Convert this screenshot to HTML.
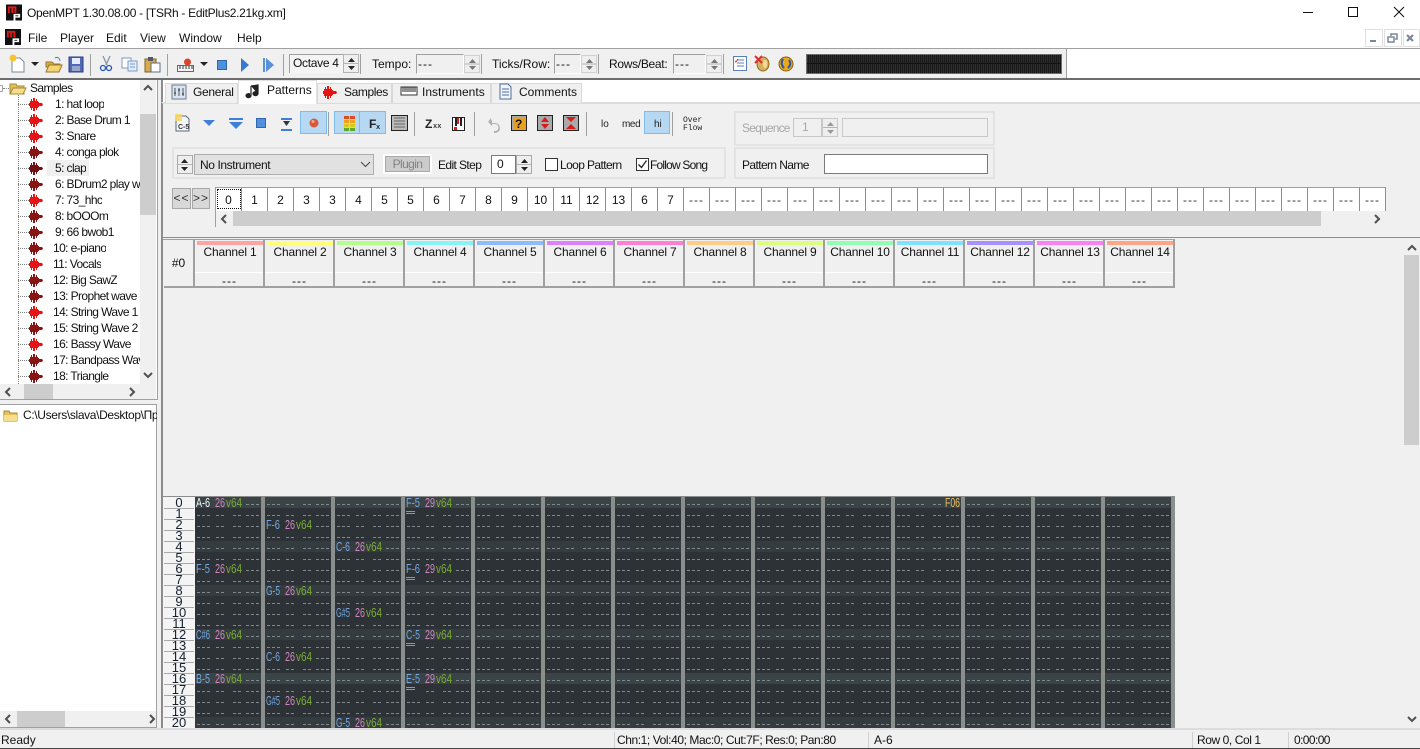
<!DOCTYPE html>
<html><head><meta charset="utf-8"><title>OpenMPT</title>
<style>
html,body{margin:0;padding:0;width:1420px;height:749px;overflow:hidden;background:#f0f0f0}
body{position:relative;font:12px/16px "Liberation Sans",sans-serif;color:#111}
.a,svg.a{position:absolute;white-space:nowrap;box-sizing:border-box}
svg.ar{width:7px;height:4px;margin-left:1px}
.t{letter-spacing:-.6px}
.q{letter-spacing:-.42px}
.bx{position:absolute;box-sizing:border-box}
.sep{position:absolute;width:1px;background:#a0a0a0}
.tab{position:absolute;box-sizing:border-box;top:83px;height:20px;border:1px solid #d9d9d9;border-bottom:0;background:#f0f0f0}
.gb{position:absolute;box-sizing:border-box;border:2px solid #e3e3e3}
.cell{position:absolute;top:187px;width:26px;height:24px;background:#fff;border-right:1.5px solid #8c8c8c;border-top:1px solid #a0a0a0;text-align:center;line-height:24px;box-sizing:border-box}
.cell:nth-child(n+19){letter-spacing:1px;color:#333}
.ch{position:absolute;top:240px;width:70px;height:48px;box-sizing:border-box;border-right:2px solid #a0a0a0;border-bottom:2px solid #a0a0a0;text-align:center}
.ch i{position:absolute;left:2px;top:1px;width:66px;height:4px}
.ch b{position:absolute;left:2px;right:0;top:4px;font-weight:normal;letter-spacing:-.2px}
.ch u{position:absolute;left:0;right:0;top:32px;border-top:1px solid #fff;text-decoration:none;line-height:17px;letter-spacing:1px;padding-left:1px}
.sp{position:absolute;width:16px;box-sizing:border-box;border:1px solid #b4b4b4;background:linear-gradient(#eee 0 46%,#b4b4b4 46% 54%,#eee 54%)}
.row{position:absolute;left:0;height:16px;width:140px}
.row s{position:absolute;left:18px;top:8px;width:11px;border-top:1px dotted #808080}
.row svg{position:absolute;left:29px;top:2px}
.row span{position:absolute;top:0;white-space:nowrap;overflow:hidden;max-width:87px;color:#111;letter-spacing:-.6px}
</style></head><body>
<svg width="0" height="0" style="position:absolute"><defs>
<symbol id="w" viewBox="0 0 14 13"><path fill="currentColor" d="M0 5h1V3h1V1h1v2h1V0h2v3h1V1h1v2h1v1h1v1h3l1 1.500-1 1.500h-3v1H9v1H8v2H7v-2H6v3H4v-3H3v2H2v-2H1V8H0z"/></symbol>
<symbol id="lg" viewBox="0 0 17 17"><rect width="17" height="17" fill="#111"/><path fill="#e01818" d="M2 2h9v7H9V4H7.6v5H5.6V4H4v5H2z"/><path fill="#fff" d="M8 10h7v4h-5v3H8zM10 11.5v1h3v-1z"/></symbol>
<symbol id="up" viewBox="0 0 9 5"><path d="M4.5 0L9 5H0z" fill="currentColor"/></symbol>
<symbol id="dn" viewBox="0 0 9 5"><path d="M0 0h9L4.5 5z" fill="currentColor"/></symbol>
<pattern id="d" width="70" height="11" patternUnits="userSpaceOnUse" x="195" y="497"><path fill="#808a8d" d="M2 7h3v1H2zM7 7h3v1H7zM12 7h3v1h-3zM21 7h3v1h-3zM26 7h3v1h-3zM38 7h3v1h-3zM43 7h3v1h-3zM51 7h3v1h-3zM56 7h3v1h-3zM61 7h3v1h-3z"/></pattern>
</defs></svg>

<!-- title bar -->
<div class="bx" style="left:0;top:0;width:1420px;height:48px;background:#fff"></div>
<svg class="a" style="left:6px;top:4px" width="16" height="17"><use href="#lg"/></svg>
<div class="a" style="left:27px;top:5px;letter-spacing:-.3px">OpenMPT 1.30.08.00 - [TSRh - EditPlus2.21kg.xm]</div>
<svg class="a" style="left:1300px;top:4px" width="115" height="18" fill="none" stroke="#111"><path d="M3 8.500h10M48.500 3.500h9v9h-9zM94 3l10 10M104 3L94 13"/></svg>
<!-- menu -->
<svg class="a" style="left:5px;top:29px" width="16" height="16"><use href="#lg"/></svg>
<div class="a" style="left:28px;top:30px">File</div><div class="a" style="left:60px;top:30px">Player</div><div class="a" style="left:106px;top:30px">Edit</div><div class="a" style="left:140px;top:30px">View</div><div class="a" style="left:179px;top:30px">Window</div><div class="a" style="left:237px;top:30px">Help</div>
<div class="bx" style="left:1365px;top:29px;width:18px;height:18px;border:1px solid #e0e0e0"></div><div class="bx" style="left:1384px;top:29px;width:18px;height:18px;border:1px solid #e0e0e0"></div><div class="bx" style="left:1403px;top:29px;width:17px;height:18px;border:1px solid #e0e0e0"></div>
<svg class="a" style="left:1365px;top:29px" width="55" height="18" fill="none" stroke="#7b879b" stroke-width="2"><path d="M5 12h6"/><path stroke-width="1.500" d="M23 8h6v5h-6zM26 7V5h6v5h-2"/><path stroke-width="2.200" d="M42 6l6 6M48 6l-6 6"/></svg>

<!-- main toolbar -->
<div class="bx" style="left:0;top:48px;width:1420px;height:32px;border-top:1px solid #a0a0a0;border-bottom:2px solid #6d6d6d;background:#fff"></div>
<div class="bx" style="left:0;top:49px;width:1067px;height:29px;background:#f0f0f0;border-right:1px solid #a0a0a0"></div>
<svg class="a" style="left:0;top:50px" width="300" height="28">
<path d="M12 8h8l4 4v10H12z" fill="#fff" stroke="#7c8a99"/><circle cx="13" cy="8" r="3.500" fill="#f5c431"/>
<path d="M31 12h8l-4 4zM200 12h8l-4 4z" fill="#222"/>
<path d="M46 12h6l2 2h6v3h-14z" fill="#d8a93c" stroke="#9a7a2c"/><path d="M46 22l3-7h13l-3 7z" fill="#f4d474" stroke="#9a7a2c"/><path d="M55 8q4-2 5 3" stroke="#3f78c0" fill="none"/>
<rect x="69" y="7" width="14" height="15" fill="#4f68b8" stroke="#2e3e80"/><rect x="72" y="8" width="8" height="6" fill="#e8eef6"/><rect x="72" y="16" width="8" height="5" fill="#9aa6c8"/>
<path d="M103 6l4 9M110 6l-4 9" stroke="#8a96a2" stroke-width="1.300"/><circle cx="103" cy="18" r="2.500" fill="none" stroke="#2458b8" stroke-width="1.300"/><circle cx="109" cy="18" r="2.500" fill="none" stroke="#2458b8" stroke-width="1.300"/>
<path d="M122 8h9v10h-9z" fill="#fff" stroke="#7a9ac8"/><path d="M128 11h9v10h-9z" fill="#e4eefa" stroke="#7a9ac8"/><path d="M130 14h5M130 17h5" stroke="#7a9ac8"/>
<rect x="145" y="9" width="11" height="13" fill="#d9a94a" stroke="#7a6330"/><path d="M151 13h9v9h-9z" fill="#fff" stroke="#5b6b80"/><rect x="148" y="7" width="5" height="4" fill="#556"/>
<rect x="177.500" y="15.500" width="16" height="6" fill="#f4f4f4" stroke="#666"/><path d="M180 16v3M183 16v3M186 16v3M189 16v3M192 16v3" stroke="#333"/><circle cx="187.500" cy="12" r="3.500" fill="#d8442c"/>
<rect x="217.500" y="10.500" width="9" height="9" fill="#4f8fdc" stroke="#2f68b0"/>
<path d="M241 8l8 7-8 7z" fill="#3a78cc"/><path d="M263 8h2v14h-2zM266 8l8 7-8 7z" fill="#5a90d8"/>
<path d="M90.500 4v22M167.500 4v22M283.500 4v22" stroke="#a0a0a0"/>
</svg>
<div class="bx" style="left:289px;top:54px;width:54px;height:19px;border-top:1px solid #a0a0a0;border-left:1px solid #a0a0a0;background:#f4f4f4;padding-left:3px;line-height:16px;letter-spacing:-.3px">Octave 4</div>
<div class="sp" style="left:343px;top:54px;height:19px"></div>
<svg class="a ar" style="left:347px;top:58px;color:#222" width="9" height="5"><use href="#up"/></svg><svg class="a ar" style="left:347px;top:66px;color:#222" width="9" height="5"><use href="#dn"/></svg>
<div class="sep" style="left:360px;top:54px;height:20px"></div>
<div class="a" style="left:372px;top:56px">Tempo:</div>
<div class="bx" style="left:416px;top:54px;width:48px;height:20px;border-top:1px solid #a0a0a0;border-left:1px solid #a0a0a0;padding-left:1px;line-height:19px;border-bottom:1px solid #fff;border-right:1px solid #fff;letter-spacing:1px">---</div>
<div class="sp" style="left:464px;top:55px;height:18px;border-color:#d0d0d0"></div>
<svg class="a ar" style="left:468px;top:59px;color:#777" width="9" height="5"><use href="#up"/></svg><svg class="a ar" style="left:468px;top:66px;color:#777" width="9" height="5"><use href="#dn"/></svg>
<div class="sep" style="left:481px;top:54px;height:20px"></div>
<div class="a" style="left:492px;top:56px">Ticks/Row:</div>
<div class="bx" style="left:554px;top:54px;width:27px;height:20px;border-top:1px solid #a0a0a0;border-left:1px solid #a0a0a0;padding-left:1px;line-height:19px;border-bottom:1px solid #fff;border-right:1px solid #fff;letter-spacing:1px">---</div>
<div class="sp" style="left:581px;top:55px;height:18px;border-color:#d0d0d0"></div>
<svg class="a ar" style="left:585px;top:59px;color:#777" width="9" height="5"><use href="#up"/></svg><svg class="a ar" style="left:585px;top:66px;color:#777" width="9" height="5"><use href="#dn"/></svg>
<div class="sep" style="left:598px;top:54px;height:20px"></div>
<div class="a" style="left:609px;top:56px;letter-spacing:-.3px">Rows/Beat:</div>
<div class="bx" style="left:673px;top:54px;width:33px;height:20px;border-top:1px solid #a0a0a0;border-left:1px solid #a0a0a0;padding-left:1px;line-height:19px;border-bottom:1px solid #fff;border-right:1px solid #fff;letter-spacing:1px">---</div>
<div class="sp" style="left:706px;top:55px;height:18px;border-color:#d0d0d0"></div>
<svg class="a ar" style="left:710px;top:59px;color:#777" width="9" height="5"><use href="#up"/></svg><svg class="a ar" style="left:710px;top:66px;color:#777" width="9" height="5"><use href="#dn"/></svg>
<div class="sep" style="left:723px;top:54px;height:20px"></div>
<svg class="a" style="left:730px;top:52px" width="70" height="24">
<rect x="3.500" y="4.500" width="13" height="14" fill="#fff" stroke="#5b80b5"/><path d="M7 8h7M7 11h7M7 14h7" stroke="#5b80b5"/><path d="M5 9l1 1 2-3" stroke="#d83030" fill="none"/>
<ellipse cx="33" cy="12" rx="6" ry="7" fill="#d8b060" stroke="#8a6a20"/><ellipse cx="35" cy="12" rx="2" ry="4" fill="#f2dc98"/><path d="M25 4l7 7M32 4l-7 7" stroke="#d83030" stroke-width="2"/>
<circle cx="56" cy="12" r="7" fill="#e8a820" stroke="#8a6010"/><path d="M53 7q-3 5 1 9M59 8q3 4-1 8" stroke="#2a58a8" stroke-width="2" fill="none"/>
</svg>
<div class="bx" style="left:806px;top:54px;width:256px;height:20px;border:1px solid #6c6c6c;background:repeating-linear-gradient(90deg,#5a1c14 0 1px,#181818 1px 2px)"></div>
<div class="bx" style="left:807px;top:63px;width:254px;height:1px;background:#111"></div>

<!-- tree top -->
<div class="bx" style="left:0;top:80px;width:157px;height:319px;background:#fff"></div>
<div class="bx" style="left:18px;top:95px;height:289px;border-left:1px dotted #808080"></div>
<div class="bx" style="left:-4px;top:85px;width:7px;height:7px;border:1px solid #a8a8a8"></div>
<div class="bx" style="left:3px;top:88px;width:6px;border-top:1px dotted #808080"></div>
<svg class="a" style="left:9px;top:81px" width="18" height="15"><path d="M1 3h6l1 2h7v8H1z" fill="#e6c05a" stroke="#a58a38"/><path d="M1 13l3-6h13l-3 6z" fill="#f6de8c" stroke="#a58a38"/></svg>
<div class="a t" style="left:30px;top:80px">Samples</div>
<div class="bx" style="left:47px;top:160px;width:42px;height:16px;background:#f0f0f0"></div>
<div class="row" style="top:96px;color:#e21414"><s></s><svg width="14" height="13"><use href="#w"/></svg><span style="left:55px">1: hat loop</span></div>
<div class="row" style="top:112px;color:#e21414"><s></s><svg width="14" height="13"><use href="#w"/></svg><span style="left:55px">2: Base Drum 1</span></div>
<div class="row" style="top:128px;color:#e21414"><s></s><svg width="14" height="13"><use href="#w"/></svg><span style="left:55px">3: Snare</span></div>
<div class="row" style="top:144px;color:#8a1414"><s></s><svg width="14" height="13"><use href="#w"/></svg><span style="left:55px">4: conga plok</span></div>
<div class="row" style="top:160px;color:#701010"><s></s><svg width="14" height="13"><use href="#w"/></svg><span style="left:55px">5: clap</span></div>
<div class="row" style="top:176px;color:#8a1414"><s></s><svg width="14" height="13"><use href="#w"/></svg><span style="left:55px;max-width:85px">6: BDrum2 play with</span></div>
<div class="row" style="top:192px;color:#e21414"><s></s><svg width="14" height="13"><use href="#w"/></svg><span style="left:55px">7: 73_hhc</span></div>
<div class="row" style="top:208px;color:#8a1414"><s></s><svg width="14" height="13"><use href="#w"/></svg><span style="left:55px">8: bOOOm</span></div>
<div class="row" style="top:224px;color:#8a1414"><s></s><svg width="14" height="13"><use href="#w"/></svg><span style="left:55px">9: 66 bwob1</span></div>
<div class="row" style="top:240px;color:#8a1414"><s></s><svg width="14" height="13"><use href="#w"/></svg><span style="left:53px">10: e-piano</span></div>
<div class="row" style="top:256px;color:#e21414"><s></s><svg width="14" height="13"><use href="#w"/></svg><span style="left:53px">11: Vocals</span></div>
<div class="row" style="top:272px;color:#8a1414"><s></s><svg width="14" height="13"><use href="#w"/></svg><span style="left:53px">12: Big SawZ</span></div>
<div class="row" style="top:288px;color:#8a1414"><s></s><svg width="14" height="13"><use href="#w"/></svg><span style="left:53px">13: Prophet wave</span></div>
<div class="row" style="top:304px;color:#e21414"><s></s><svg width="14" height="13"><use href="#w"/></svg><span style="left:53px">14: String Wave 1</span></div>
<div class="row" style="top:320px;color:#8a1414"><s></s><svg width="14" height="13"><use href="#w"/></svg><span style="left:53px">15: String Wave 2</span></div>
<div class="row" style="top:336px;color:#e21414"><s></s><svg width="14" height="13"><use href="#w"/></svg><span style="left:53px">16: Bassy Wave</span></div>
<div class="row" style="top:352px;color:#8a1414"><s></s><svg width="14" height="13"><use href="#w"/></svg><span style="left:53px">17: Bandpass Wave</span></div>
<div class="row" style="top:368px;color:#8a1414"><s></s><svg width="14" height="13"><use href="#w"/></svg><span style="left:53px">18: Triangle</span></div>
<!-- tree scrollbars -->
<div class="bx" style="left:140px;top:80px;width:16px;height:304px;background:#f0f0f0"></div>
<div class="bx" style="left:140px;top:114px;width:16px;height:101px;background:#cdcdcd"></div>
<svg class="a" style="left:143px;top:84px" width="10" height="8" fill="none" stroke="#505050" stroke-width="2"><path d="M1 6l4-4 4 4"/></svg>
<svg class="a" style="left:143px;top:371px" width="10" height="8" fill="none" stroke="#505050" stroke-width="2"><path d="M1 2l4 4 4-4"/></svg>
<div class="bx" style="left:0;top:384px;width:156px;height:15px;background:#f0f0f0"></div>
<div class="bx" style="left:24px;top:384px;width:29px;height:15px;background:#cdcdcd"></div>
<svg class="a" style="left:4px;top:387px" width="152" height="10" fill="none" stroke="#505050" stroke-width="2"><path d="M6 1L2 5l4 4M126 1l4 4-4 4"/></svg>
<div class="bx" style="left:0;top:399px;width:157px;height:1px;background:#a0a0a0"></div>
<!-- tree bottom -->
<div class="bx" style="left:0;top:404px;width:157px;height:324px;background:#fff;border-top:1px solid #a0a0a0;border-right:1px solid #a0a0a0;border-bottom:1px solid #a0a0a0"></div>
<svg class="a" style="left:3px;top:408px" width="16" height="15"><path d="M1 3h5l1 2h7v8H1z" fill="#e6c05a" stroke="#a58a38"/><path d="M1 7h13v6H1z" fill="#f6de8c"/></svg>
<div class="a" style="left:23px;top:407px;width:134px;overflow:hidden;letter-spacing:-.35px">C:\Users\slava\Desktop\Прочее</div>
<div class="bx" style="left:0;top:711px;width:156px;height:16px;background:#f0f0f0"></div>
<div class="bx" style="left:17px;top:711px;width:48px;height:16px;background:#cdcdcd"></div>
<svg class="a" style="left:4px;top:714px" width="152" height="10" fill="none" stroke="#505050" stroke-width="2"><path d="M6 1L2 5l4 4M146 1l4 4-4 4"/></svg>

<!-- right top pane -->
<div class="bx" style="left:157px;top:80px;width:1px;height:320px;background:#a0a0a0"></div>
<div class="bx" style="left:161px;top:80px;width:1259px;height:23px;background:#fff;border-left:2px solid #8c8c8c"></div>
<div class="bx" style="left:161px;top:102px;width:1259px;height:136px;background:#f0f0f0;border-left:2px solid #8c8c8c;border-top:2px solid #dcdcdc;border-bottom:1px solid #8c8c8c"></div>
<div class="tab" style="left:165px;width:73px"></div><div class="tab" style="left:317px;width:75px"></div><div class="tab" style="left:392px;width:99px"></div><div class="tab" style="left:491px;width:91px"></div>
<div class="bx" style="left:238px;top:80px;width:79px;height:24px;background:#fff;border:1px solid #e0e0e0;border-bottom:0"></div>
<div class="a" style="left:193px;top:84px;letter-spacing:-.3px">General</div><div class="a" style="left:267px;top:82px">Patterns</div><div class="a" style="left:344px;top:84px;letter-spacing:-.4px">Samples</div><div class="a" style="left:422px;top:84px">Instruments</div><div class="a" style="left:519px;top:84px">Comments</div>
<svg class="a" style="left:165px;top:80px" width="360" height="24">
<rect x="7" y="5" width="14" height="14" fill="#d8e4f2" stroke="#6a7a90"/><path d="M10 8v8M14 8v8M18 8v8" stroke="#555"/><path d="M9 13h2M13 10h2M17 14h2" stroke="#333"/>
<path d="M86 6l7-1v9M93 14a2.500 2 0 1 1-1-2M86 6v10M86 16a2.500 2 0 1 1-1-2" fill="#222" stroke="#222" stroke-width="1.200"/>
<g transform="translate(158,6)" color="#e21414"><use href="#w" width="14" height="13"/></g>
<rect x="236" y="7" width="16" height="8" fill="#fff" stroke="#333"/><path d="M238 7v5M240 7v5M242 7v5M244 7v5M246 7v5M248 7v5M250 7v5" stroke="#222"/>
<path d="M335 4h8l3 3v12h-11z" fill="#f2f6fc" stroke="#4d6c98"/><path d="M337 9h7M337 12h7M337 15h7" stroke="#4d6c98"/>
</svg>

<!-- pattern toolbar -->
<div class="bx" style="left:300px;top:111px;width:27px;height:23px;background:#b6d8f3;border:1px solid #7fbbeb"></div>
<div class="bx" style="left:334px;top:111px;width:26px;height:23px;background:#b6d8f3;border:1px solid #7fbbeb"></div>
<div class="bx" style="left:360px;top:111px;width:26px;height:23px;background:#b6d8f3;border:1px solid #7fbbeb;border-left:0"></div>
<div class="bx" style="left:644px;top:111px;width:26px;height:23px;background:#b6d8f3;border:1px solid #7fbbeb"></div>
<svg class="a" style="left:170px;top:108px" width="540" height="30">
<path d="M6 8h10l3 3v12H6z" fill="#f4f6fa" stroke="#5a6a7a"/><rect x="5" y="6" width="7" height="7" fill="#f6d866" opacity=".9"/><text x="8" y="21" font-family="Liberation Sans" font-size="7" font-weight="bold" fill="#333">C-5</text>
<path d="M33 12h12l-6 6z" fill="#3f7fd8"/>
<path d="M59 10h14v2H59z" fill="#3f7fd8"/><path d="M59 14h14l-7 7z" fill="#3f7fd8"/>
<rect x="86.500" y="10.500" width="9" height="9" fill="#4f8fdc" stroke="#2f68b0"/>
<path d="M111 10h11v2h-11zM111 21h11v2h-11z" fill="#3f7fd8"/><path d="M113 13h7l-3.500 5z" fill="#334"/>
<circle cx="144" cy="15" r="4.500" fill="#d8583c"/><circle cx="143" cy="13.500" r="1.500" fill="#f0a890"/>
<path d="M158.500 4v24M244.500 4v24M304.500 4v24M416.500 4v24M502.500 4v24" stroke="#a0a0a0"/>
<path d="M174 8h5v3h-5zM180 8h5v3h-5z" fill="#e04a20"/><path d="M174 12h5v3h-5zM180 12h5v3h-5z" fill="#f0a020"/><path d="M174 16h5v3h-5zM180 16h5v3h-5z" fill="#d8c820"/><path d="M174 20h5v3h-5zM180 20h5v3h-5z" fill="#60a830"/>
<text x="199" y="20" font-family="Liberation Sans" font-size="12" font-weight="bold" fill="#222">F</text><text x="206" y="21" font-family="Liberation Mono" font-size="7" font-weight="bold" fill="#222">x</text>
<rect x="221.500" y="7.500" width="16" height="15" fill="#bbb" stroke="#222"/><path d="M224 10h11M224 13h11M224 16h11M224 19h11" stroke="#666"/>
<text x="255" y="20" font-family="Liberation Sans" font-size="12" font-weight="bold" fill="#222">Z</text><text x="263" y="20" font-family="Liberation Mono" font-size="7" font-weight="bold" fill="#333">xx</text>
<rect x="282.500" y="9.500" width="12" height="13" fill="#fff" stroke="#222"/><path d="M285 10h2v8h-2zM290 10h2v8h-2z" fill="#222"/><path d="M287 10h2v6h-2z" fill="#d82020"/><path d="M284 19h3v3h-3z" fill="#d82020"/>
<path d="M322 12l-3 3 3 3v-2h3a3 3 0 0 1 0 7h-1v2h1a5 5 0 0 0 0-10h-3z" fill="#b0b0b0"/><path d="M321 10l-3 4 4 3" fill="#b0b0b0"/>
<rect x="341.500" y="7.500" width="15" height="15" fill="#aaa" stroke="#222"/><rect x="343" y="9" width="12" height="12" fill="#e8a020"/><text x="345" y="20" font-family="Liberation Sans" font-size="12" font-weight="bold" fill="#111">?</text>
<rect x="367.500" y="7.500" width="15" height="15" fill="#aaa" stroke="#222"/><path d="M375 9l4 5h-8zM375 21l-4-5h8z" fill="#d81c1c"/>
<rect x="393.500" y="7.500" width="15" height="15" fill="#aaa" stroke="#222"/><path d="M396 9h10l-5 5zM396 21h10l-5-5z" fill="#d81c1c"/>
<text x="431" y="19" font-family="Liberation Sans" font-size="10" fill="#222">lo</text><text x="452" y="19" font-family="Liberation Sans" font-size="10" letter-spacing="-.4" fill="#222">med</text><text x="484" y="19" font-family="Liberation Sans" font-size="10" fill="#222">hi</text>
<text x="513" y="14" font-family="Liberation Mono" font-size="8" fill="#222">Over</text><text x="513" y="22" font-family="Liberation Mono" font-size="8" fill="#222">Flow</text>
</svg>
<!-- sequence group -->
<div class="gb" style="left:734px;top:111px;width:261px;height:35px"></div>
<div class="a t" style="left:742px;top:120px;color:#a8a8a8;letter-spacing:-.8px">Sequence</div>
<div class="bx" style="left:793px;top:118px;width:29px;height:19px;border:1px solid #c8c8c8;color:#a8a8a8;padding-left:8px;line-height:17px">1</div>
<div class="sp" style="left:822px;top:118px;height:19px;border-color:#c8c8c8"></div>
<svg class="a ar" style="left:826px;top:122px;color:#999" width="9" height="5"><use href="#up"/></svg><svg class="a ar" style="left:826px;top:130px;color:#999" width="9" height="5"><use href="#dn"/></svg>
<div class="bx" style="left:842px;top:118px;width:146px;height:19px;border:1px solid #c8c8c8"></div>
<!-- row 2 -->
<div class="gb" style="left:172px;top:147px;width:554px;height:32px"></div>
<div class="sp" style="left:177px;top:155px;height:19px;border-color:#a8a8a8"></div>
<svg class="a ar" style="left:180px;top:159px;color:#222" width="9" height="5"><use href="#up"/></svg><svg class="a ar" style="left:180px;top:167px;color:#222" width="9" height="5"><use href="#dn"/></svg>
<div class="bx" style="left:194px;top:154px;width:180px;height:21px;background:#e1e1e1;border:1px solid #adadad;padding-left:5px;line-height:20px;letter-spacing:-.4px">No Instrument</div>
<svg class="a" style="left:360px;top:161px" width="11" height="7" fill="none" stroke="#444"><path d="M1 1l4.500 4.500L10 1"/></svg>
<div class="bx" style="left:383px;top:154px;width:49px;height:20px;background:#ccc;border:2px solid #fff;outline:1px solid #aaa;outline-offset:-3px;color:#838383;text-align:center;line-height:16px;letter-spacing:-.6px">Plugin</div>
<div class="a t" style="left:438px;top:157px">Edit Step</div>
<div class="bx" style="left:491px;top:155px;width:25px;height:19px;background:#fff;border:1px solid #7a7a7a;padding-left:5px;line-height:17px">0</div>
<div class="sp" style="left:516px;top:155px;height:19px;border-color:#a8a8a8"></div>
<svg class="a ar" style="left:520px;top:159px;color:#222" width="9" height="5"><use href="#up"/></svg><svg class="a ar" style="left:520px;top:167px;color:#222" width="9" height="5"><use href="#dn"/></svg>
<div class="bx" style="left:545px;top:158px;width:13px;height:13px;background:#fff;border:1px solid #333"></div>
<div class="a t" style="left:560px;top:157px">Loop Pattern</div>
<svg class="a" style="left:636px;top:158px" width="13" height="13"><rect x=".5" y=".5" width="12" height="12" fill="#fff" stroke="#333"/><path d="M2.500 6.500l3 3 5-7" fill="none" stroke="#222" stroke-width="1.300"/></svg>
<div class="a t" style="left:650px;top:157px;letter-spacing:-.8px">Follow Song</div>
<div class="gb" style="left:734px;top:147px;width:261px;height:32px"></div>
<div class="a t" style="left:742px;top:157px">Pattern Name</div>
<div class="bx" style="left:824px;top:154px;width:164px;height:20px;background:#fff;border:1px solid #7a7a7a"></div>
<!-- order list -->
<div class="bx" style="left:172px;top:188px;width:19px;height:21px;background:#d8d8d8;border:1px solid #a8a8a8;text-align:center;line-height:19px;letter-spacing:1px;color:#333">&lt;&lt;</div>
<div class="bx" style="left:192px;top:188px;width:18px;height:21px;background:#d8d8d8;border:1px solid #a8a8a8;text-align:center;line-height:19px;letter-spacing:1px;color:#333">&gt;&gt;</div>
<div><div class="cell" style="left:216px">0</div><div class="cell" style="left:242px">1</div><div class="cell" style="left:268px">2</div><div class="cell" style="left:294px">3</div><div class="cell" style="left:320px">3</div><div class="cell" style="left:346px">4</div><div class="cell" style="left:372px">5</div><div class="cell" style="left:398px">5</div><div class="cell" style="left:424px">6</div><div class="cell" style="left:450px">7</div><div class="cell" style="left:476px">8</div><div class="cell" style="left:502px">9</div><div class="cell" style="left:528px">10</div><div class="cell" style="left:554px">11</div><div class="cell" style="left:580px">12</div><div class="cell" style="left:606px">13</div><div class="cell" style="left:632px">6</div><div class="cell" style="left:658px">7</div><div class="cell" style="left:684px">---</div><div class="cell" style="left:710px">---</div><div class="cell" style="left:736px">---</div><div class="cell" style="left:762px">---</div><div class="cell" style="left:788px">---</div><div class="cell" style="left:814px">---</div><div class="cell" style="left:840px">---</div><div class="cell" style="left:866px">---</div><div class="cell" style="left:892px">---</div><div class="cell" style="left:918px">---</div><div class="cell" style="left:944px">---</div><div class="cell" style="left:970px">---</div><div class="cell" style="left:996px">---</div><div class="cell" style="left:1022px">---</div><div class="cell" style="left:1048px">---</div><div class="cell" style="left:1074px">---</div><div class="cell" style="left:1100px">---</div><div class="cell" style="left:1126px">---</div><div class="cell" style="left:1152px">---</div><div class="cell" style="left:1178px">---</div><div class="cell" style="left:1204px">---</div><div class="cell" style="left:1230px">---</div><div class="cell" style="left:1256px">---</div><div class="cell" style="left:1282px">---</div><div class="cell" style="left:1308px">---</div><div class="cell" style="left:1334px">---</div><div class="cell" style="left:1360px">---</div></div>
<div class="bx" style="left:217px;top:189px;width:24px;height:20px;border:1px dotted #111"></div>
<div class="bx" style="left:215px;top:187px;width:1px;height:40px;background:#a0a0a0"></div>
<div class="bx" style="left:216px;top:211px;width:1169px;height:16px;background:#f0f0f0"></div>
<div class="bx" style="left:233px;top:211px;width:1088px;height:15px;background:#cdcdcd"></div>
<svg class="a" style="left:220px;top:214px" width="1165" height="10" fill="none" stroke="#505050" stroke-width="2"><path d="M6 1L2 5l4 4M1155 1l4 4-4 4"/></svg>

<!-- pattern view -->
<div class="bx" style="left:161px;top:238px;width:1259px;height:490px;background:#f0f0f0;border-left:2px solid #8c8c8c"></div>
<div class="bx" style="left:164px;top:239px;width:31px;height:49px;border:1px solid #a0a0a0;border-top:0;border-left:0;border-bottom-width:2px;border-right-width:2px;text-align:center;line-height:48px">#0</div>
<div class="bx" style="left:163px;top:239px;width:1012px;height:1px;background:#a0a0a0"></div>
<div class="ch" style="left:195px"><i style="background:#ffa4a4"></i><b>Channel 1</b><u>---</u></div>
<div class="ch" style="left:265px"><i style="background:#ffff78"></i><b>Channel 2</b><u>---</u></div>
<div class="ch" style="left:335px"><i style="background:#b4ff8c"></i><b>Channel 3</b><u>---</u></div>
<div class="ch" style="left:405px"><i style="background:#84f4f4"></i><b>Channel 4</b><u>---</u></div>
<div class="ch" style="left:475px"><i style="background:#8cbcff"></i><b>Channel 5</b><u>---</u></div>
<div class="ch" style="left:545px"><i style="background:#dc80fc"></i><b>Channel 6</b><u>---</u></div>
<div class="ch" style="left:615px"><i style="background:#ff80d0"></i><b>Channel 7</b><u>---</u></div>
<div class="ch" style="left:685px"><i style="background:#ffcc88"></i><b>Channel 8</b><u>---</u></div>
<div class="ch" style="left:755px"><i style="background:#dcff80"></i><b>Channel 9</b><u>---</u></div>
<div class="ch" style="left:825px"><i style="background:#90ffb4"></i><b>Channel 10</b><u>---</u></div>
<div class="ch" style="left:895px"><i style="background:#80e0ff"></i><b>Channel 11</b><u>---</u></div>
<div class="ch" style="left:965px"><i style="background:#a890ff"></i><b>Channel 12</b><u>---</u></div>
<div class="ch" style="left:1035px"><i style="background:#fc80f4"></i><b>Channel 13</b><u>---</u></div>
<div class="ch" style="left:1105px"><i style="background:#ffa484"></i><b>Channel 14</b><u>---</u></div>

<svg class="a" style="left:163px;top:496px" width="1012" height="232" font-family="Liberation Sans">
<g transform="translate(-163,-496)">
<rect x="163" y="497" width="32" height="231" fill="#f4f4f4"/>
<rect x="163" y="496" width="1012" height="1" fill="#8c8c8c"/>
<path stroke="#a8a8a8" d="M164 508.500h30M164 519.500h30M164 530.500h30M164 541.500h30M164 552.500h30M164 563.500h30M164 574.500h30M164 585.500h30M164 596.500h30M164 607.500h30M164 618.500h30M164 629.500h30M164 640.500h30M164 651.500h30M164 662.500h30M164 673.500h30M164 684.500h30M164 695.500h30M164 706.500h30M164 717.500h30"/>
<g font-size="13" fill="#15202e" text-anchor="middle"><text x="179" y="507">0</text><text x="179" y="518">1</text><text x="179" y="529">2</text><text x="179" y="540">3</text><text x="179" y="551">4</text><text x="179" y="562">5</text><text x="179" y="573">6</text><text x="179" y="584">7</text><text x="179" y="595">8</text><text x="179" y="606">9</text><text x="179" y="617">10</text><text x="179" y="628">11</text><text x="179" y="639">12</text><text x="179" y="650">13</text><text x="179" y="661">14</text><text x="179" y="672">15</text><text x="179" y="683">16</text><text x="179" y="694">17</text><text x="179" y="705">18</text><text x="179" y="716">19</text><text x="179" y="727">20</text></g>
<rect x="195" y="497" width="980" height="231" fill="#2c3235"/>
<rect x="195" y="497" width="980" height="11" fill="#3a4346"/><rect x="195" y="541" width="980" height="11" fill="#353c3f"/><rect x="195" y="585" width="980" height="11" fill="#353c3f"/><rect x="195" y="629" width="980" height="11" fill="#353c3f"/><rect x="195" y="673" width="980" height="11" fill="#3a4346"/><rect x="195" y="717" width="980" height="11" fill="#353c3f"/>
<rect x="195" y="497" width="980" height="231" fill="url(#d)"/>
<!-- covers for note cells -->
<rect x="196" y="497" width="50" height="11" fill="#3a4346"/><rect x="196" y="563" width="50" height="11" fill="#2c3235"/><rect x="196" y="629" width="50" height="11" fill="#353c3f"/><rect x="196" y="673" width="50" height="11" fill="#3a4346"/>
<rect x="266" y="519" width="50" height="11" fill="#2c3235"/><rect x="266" y="585" width="50" height="11" fill="#353c3f"/><rect x="266" y="651" width="50" height="11" fill="#2c3235"/><rect x="266" y="695" width="50" height="11" fill="#2c3235"/>
<rect x="336" y="541" width="50" height="11" fill="#353c3f"/><rect x="336" y="607" width="50" height="11" fill="#2c3235"/><rect x="336" y="717" width="50" height="11" fill="#353c3f"/>
<rect x="406" y="497" width="50" height="11" fill="#3a4346"/><rect x="406" y="563" width="50" height="11" fill="#2c3235"/><rect x="406" y="629" width="50" height="11" fill="#353c3f"/><rect x="406" y="673" width="50" height="11" fill="#3a4346"/>
<rect x="944" y="497" width="18" height="11" fill="#3a4346"/>
<path fill="#2c3235" d="M406 508h15v11h-15zM406 574h15v11h-15zM406 640h15v11h-15zM406 684h15v11h-15z"/>
<path fill="#8f989b" d="M406 511h9v1h-9zM406 513h9v1h-9zM406 577h9v1h-9zM406 579h9v1h-9zM406 643h9v1h-9zM406 645h9v1h-9zM406 687h9v1h-9zM406 689h9v1h-9z"/>
<!-- separators -->
<path fill="#8a8e8c" d="M261 497h4v231h-4zM331 497h4v231h-4zM401 497h4v231h-4zM471 497h4v231h-4zM541 497h4v231h-4zM611 497h4v231h-4zM681 497h4v231h-4zM751 497h4v231h-4zM821 497h4v231h-4zM891 497h4v231h-4zM961 497h4v231h-4zM1031 497h4v231h-4zM1101 497h4v231h-4zM1171 497h4v231h-4z"/>
<!-- notes -->
<g font-size="13" font-family="Liberation Sans Narrow, Liberation Sans, sans-serif">
<g fill="#74a8e4">
<text x="196" y="507" fill="#f8f8f8" textLength="14" lengthAdjust="spacingAndGlyphs">A-6</text>
<text x="196" y="573" textLength="14" lengthAdjust="spacingAndGlyphs">F-5</text>
<text x="196" y="639" textLength="14" lengthAdjust="spacingAndGlyphs">C#6</text>
<text x="196" y="683" textLength="14" lengthAdjust="spacingAndGlyphs">B-5</text>
<text x="266" y="529" textLength="14" lengthAdjust="spacingAndGlyphs">F-6</text>
<text x="266" y="595" textLength="14" lengthAdjust="spacingAndGlyphs">G-5</text>
<text x="266" y="661" textLength="14" lengthAdjust="spacingAndGlyphs">C-6</text>
<text x="266" y="705" textLength="14" lengthAdjust="spacingAndGlyphs">G#5</text>
<text x="336" y="551" textLength="14" lengthAdjust="spacingAndGlyphs">C-6</text>
<text x="336" y="617" textLength="14" lengthAdjust="spacingAndGlyphs">G#5</text>
<text x="336" y="727" textLength="14" lengthAdjust="spacingAndGlyphs">G-5</text>
<text x="406" y="507" textLength="14" lengthAdjust="spacingAndGlyphs">F-5</text>
<text x="406" y="573" textLength="14" lengthAdjust="spacingAndGlyphs">F-6</text>
<text x="406" y="639" textLength="14" lengthAdjust="spacingAndGlyphs">C-5</text>
<text x="406" y="683" textLength="14" lengthAdjust="spacingAndGlyphs">E-5</text>
</g>
<g fill="#d088c0">
<text x="215" y="507" textLength="10" lengthAdjust="spacingAndGlyphs">26</text><text x="215" y="573" textLength="10" lengthAdjust="spacingAndGlyphs">26</text><text x="215" y="639" textLength="10" lengthAdjust="spacingAndGlyphs">26</text><text x="215" y="683" textLength="10" lengthAdjust="spacingAndGlyphs">26</text>
<text x="285" y="529" textLength="10" lengthAdjust="spacingAndGlyphs">26</text><text x="285" y="595" textLength="10" lengthAdjust="spacingAndGlyphs">26</text><text x="285" y="661" textLength="10" lengthAdjust="spacingAndGlyphs">26</text><text x="285" y="705" textLength="10" lengthAdjust="spacingAndGlyphs">26</text>
<text x="355" y="551" textLength="10" lengthAdjust="spacingAndGlyphs">26</text><text x="355" y="617" textLength="10" lengthAdjust="spacingAndGlyphs">26</text><text x="355" y="727" textLength="10" lengthAdjust="spacingAndGlyphs">26</text>
<text x="425" y="507" textLength="10" lengthAdjust="spacingAndGlyphs">29</text><text x="425" y="573" textLength="10" lengthAdjust="spacingAndGlyphs">29</text><text x="425" y="639" textLength="10" lengthAdjust="spacingAndGlyphs">29</text><text x="425" y="683" textLength="10" lengthAdjust="spacingAndGlyphs">29</text>
</g>
<g fill="#7cad38">
<text x="226" y="507" textLength="16" lengthAdjust="spacingAndGlyphs">v64</text><text x="226" y="573" textLength="16" lengthAdjust="spacingAndGlyphs">v64</text><text x="226" y="639" textLength="16" lengthAdjust="spacingAndGlyphs">v64</text><text x="226" y="683" textLength="16" lengthAdjust="spacingAndGlyphs">v64</text>
<text x="296" y="529" textLength="16" lengthAdjust="spacingAndGlyphs">v64</text><text x="296" y="595" textLength="16" lengthAdjust="spacingAndGlyphs">v64</text><text x="296" y="661" textLength="16" lengthAdjust="spacingAndGlyphs">v64</text><text x="296" y="705" textLength="16" lengthAdjust="spacingAndGlyphs">v64</text>
<text x="366" y="551" textLength="16" lengthAdjust="spacingAndGlyphs">v64</text><text x="366" y="617" textLength="16" lengthAdjust="spacingAndGlyphs">v64</text><text x="366" y="727" textLength="16" lengthAdjust="spacingAndGlyphs">v64</text>
<text x="436" y="507" textLength="16" lengthAdjust="spacingAndGlyphs">v64</text><text x="436" y="573" textLength="16" lengthAdjust="spacingAndGlyphs">v64</text><text x="436" y="639" textLength="16" lengthAdjust="spacingAndGlyphs">v64</text><text x="436" y="683" textLength="16" lengthAdjust="spacingAndGlyphs">v64</text>
</g>
<text x="945" y="507" fill="#eebc62" textLength="15" lengthAdjust="spacingAndGlyphs">F06</text>
</g>
</g>
</svg>
<!-- pattern scrollbar -->
<div class="bx" style="left:1403px;top:238px;width:17px;height:490px;background:#f0f0f0"></div>
<div class="bx" style="left:1404px;top:255px;width:15px;height:190px;background:#cdcdcd"></div>
<svg class="a" style="left:1407px;top:244px" width="10" height="8" fill="none" stroke="#505050" stroke-width="2"><path d="M1 6l4-4 4 4"/></svg>
<svg class="a" style="left:1407px;top:715px" width="10" height="8" fill="none" stroke="#505050" stroke-width="2"><path d="M1 2l4 4 4-4"/></svg>

<!-- status bar -->
<div class="bx" style="left:0;top:728px;width:1420px;height:21px;background:#f0f0f0;border-top:2px solid #dcdcdc;border-bottom:1px solid #444"></div>
<div class="a" style="left:1px;top:732px">Ready</div>
<div class="sep" style="left:614px;top:732px;height:16px;background:#d0d0d0"></div>
<div class="a q" style="left:617px;top:732px">Chn:1; Vol:40; Mac:0; Cut:7F; Res:0; Pan:80</div>
<div class="sep" style="left:868px;top:732px;height:16px;background:#d0d0d0"></div>
<div class="a" style="left:874px;top:732px">A-6</div>
<div class="sep" style="left:1192px;top:732px;height:16px;background:#d0d0d0"></div>
<div class="a q" style="left:1197px;top:732px">Row 0, Col 1</div>
<div class="sep" style="left:1288px;top:732px;height:16px;background:#d0d0d0"></div>
<div class="a t" style="left:1294px;top:732px">0:00:00</div>
</body></html>
